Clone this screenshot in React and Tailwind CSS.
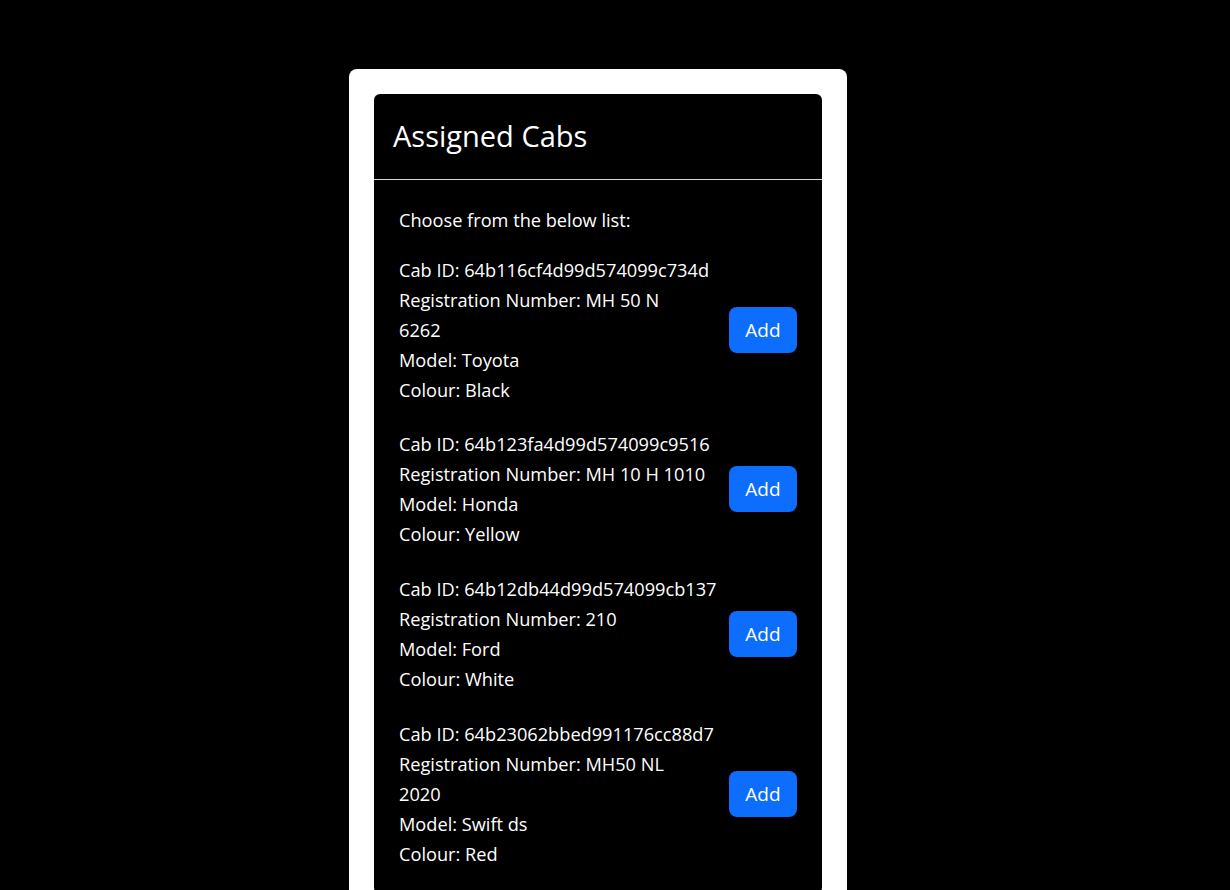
import React from "react";

const cabs = [
  { id: "64b116cf4d99d574099c734d", reg: ["Registration Number: MH 50 N", "6262"], model: "Toyota", colour: "Black", mt: "mt-0" },
  { id: "64b123fa4d99d574099c9516", reg: ["Registration Number: MH 10 H 1010"], model: "Honda", colour: "Yellow", mt: "mt-[24px]" },
  { id: "64b12db44d99d574099cb137", reg: ["Registration Number: 210"], model: "Ford", colour: "White", mt: "mt-[25px]" },
  { id: "64b23062bbed991176cc88d7", reg: ["Registration Number: MH50 NL", "2020"], model: "Swift ds", colour: "Red", mt: "mt-[25px]" },
];

export default function App() {
  return (
    <div className="min-h-[890px] bg-black" style={{ fontFamily: "'Open Sans', sans-serif" }}>
      <div className="pl-[349px] pt-[69px]">
        <div className="w-[498px] bg-white rounded-lg p-[25px]">
          <div className="bg-black rounded-md text-white">
            <div className="h-[86px] flex items-center px-[19px] pb-[2px] border-b border-[#d4d4d4]">
              <h2 className="text-[29px] leading-[36px]">Assigned Cabs</h2>
            </div>
            <div className="px-[25px] pt-[25px] pb-[25px] text-[18.2px] leading-[30px]">
              <p className="mb-[20px]">Choose from the below list:</p>
              <div className="flex flex-col">
                {cabs.map((c) => (
                  <div key={c.id} className={`flex items-center justify-between ${c.mt}`}>
                    <div className="whitespace-nowrap">
                      <div>Cab ID: {c.id}</div>
                      {c.reg.map((r) => (
                        <div key={r}>{r}</div>
                      ))}
                      <div>Model: {c.model}</div>
                      <div>Colour: {c.colour}</div>
                    </div>
                    <button className="w-[68px] h-[46px] flex items-center justify-center bg-[#0d6efd] text-white rounded-lg text-[19px] leading-[30px]">
                      Add
                    </button>
                  </div>
                ))}
              </div>
            </div>
          </div>
        </div>
      </div>
    </div>
  );
}
